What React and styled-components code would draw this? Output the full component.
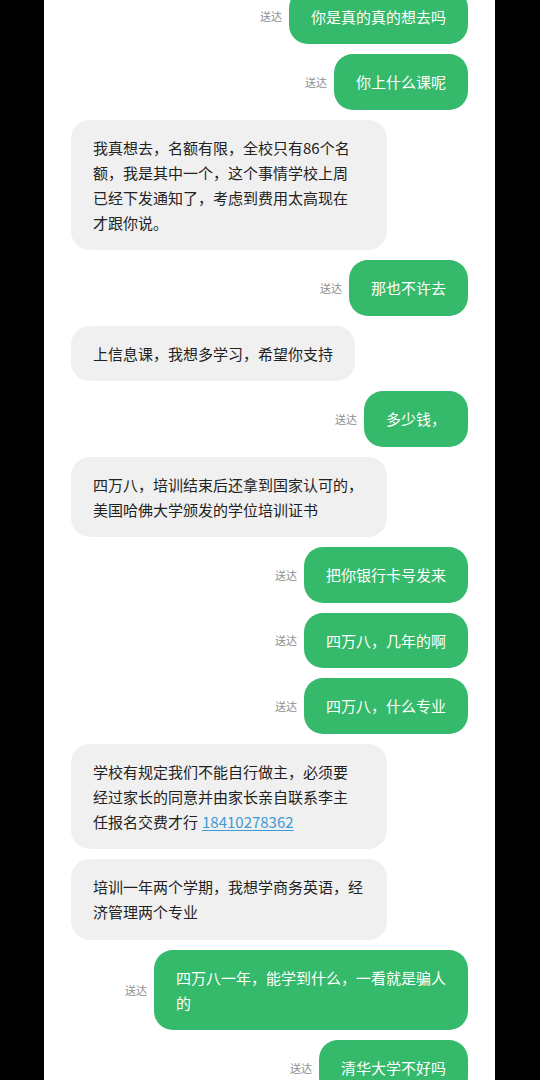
import React from "react";
import styled, { createGlobalStyle } from "styled-components";

const GlobalStyle = createGlobalStyle`
  html, body {
    margin: 0;
    padding: 0;
    background: #000;
  }
  body {
    font-family: "Noto Sans CJK SC", "Noto Sans", sans-serif;
  }
`;

const Screen = styled.div`
  width: 540px;
  height: 1080px;
  display: flex;
  background: #000;
  overflow: hidden;
`;

const Chat = styled.div`
  margin-left: 44px;
  width: 451px;
  height: 1080px;
  background: #fff;
  overflow: hidden;
`;

const List = styled.div`
  display: flex;
  flex-direction: column;
  gap: 10px;
  padding: 0 27px;
  margin-top: -11.5px;
`;

const Row = styled.div`
  display: flex;
  align-items: center;
  justify-content: ${(p) => (p.$mine ? "flex-end" : "flex-start")};
  gap: 7px;
`;

const Status = styled.span`
  font-size: 11px;
  color: #8e8e8e;
  line-height: 14px;
`;

const Bubble = styled.div`
  box-sizing: border-box;
  padding: 15.25px 22px;
  border-radius: 19px;
  font-size: 15px;
  line-height: 25px;
  white-space: pre;
  background: ${(p) => (p.$mine ? "#35b96b" : "#f0f0f0")};
  color: ${(p) => (p.$mine ? "#fff" : "#222")};
  width: ${(p) => (p.$wide ? "316px" : "auto")};
`;

const Line = styled.div`
  display: flex;
  align-items: baseline;
  gap: 4px;
`;

const Phone = styled.span`
  color: #3d9ad6;
  text-decoration: underline;
  text-underline-offset: 2px;
`;

const messages = [
  { mine: true, text: "你是真的真的想去吗" },
  { mine: true, text: "你上什么课呢" },
  {
    mine: false,
    wide: true,
    text: "我真想去，名额有限，全校只有86个名\n额，我是其中一个，这个事情学校上周\n已经下发通知了，考虑到费用太高现在\n才跟你说。",
  },
  { mine: true, text: "那也不许去" },
  { mine: false, text: "上信息课，我想多学习，希望你支持" },
  { mine: true, text: "多少钱，" },
  {
    mine: false,
    wide: true,
    text: "四万八，培训结束后还拿到国家认可的，\n美国哈佛大学颁发的学位培训证书",
  },
  { mine: true, text: "把你银行卡号发来" },
  { mine: true, text: "四万八，几年的啊" },
  { mine: true, text: "四万八，什么专业" },
  {
    mine: false,
    wide: true,
    text: "学校有规定我们不能自行做主，必须要\n经过家长的同意并由家长亲自联系李主\n任报名交费才行",
    phone: "18410278362",
  },
  {
    mine: false,
    wide: true,
    text: "培训一年两个学期，我想学商务英语，经\n济管理两个专业",
  },
  { mine: true, text: "四万八一年，能学到什么，一看就是骗人\n的" },
  { mine: true, text: "清华大学不好吗" },
];

const App = () => {
  return (
    <>
      <GlobalStyle />
      <Screen>
        <Chat>
          <List>
            {messages.map((m, i) => {
              const lines = m.text.split("\n");
              return (
                <Row $mine={m.mine} key={i}>
                  {m.mine && <Status>送达</Status>}
                  <Bubble $mine={m.mine} $wide={m.wide}>
                    {lines.map((line, j) => (
                      <Line key={j}>
                        <span>{line}</span>
                        {m.phone && j === lines.length - 1 && (
                          <Phone>{m.phone}</Phone>
                        )}
                      </Line>
                    ))}
                  </Bubble>
                </Row>
              );
            })}
          </List>
        </Chat>
      </Screen>
    </>
  );
};

export default App;
